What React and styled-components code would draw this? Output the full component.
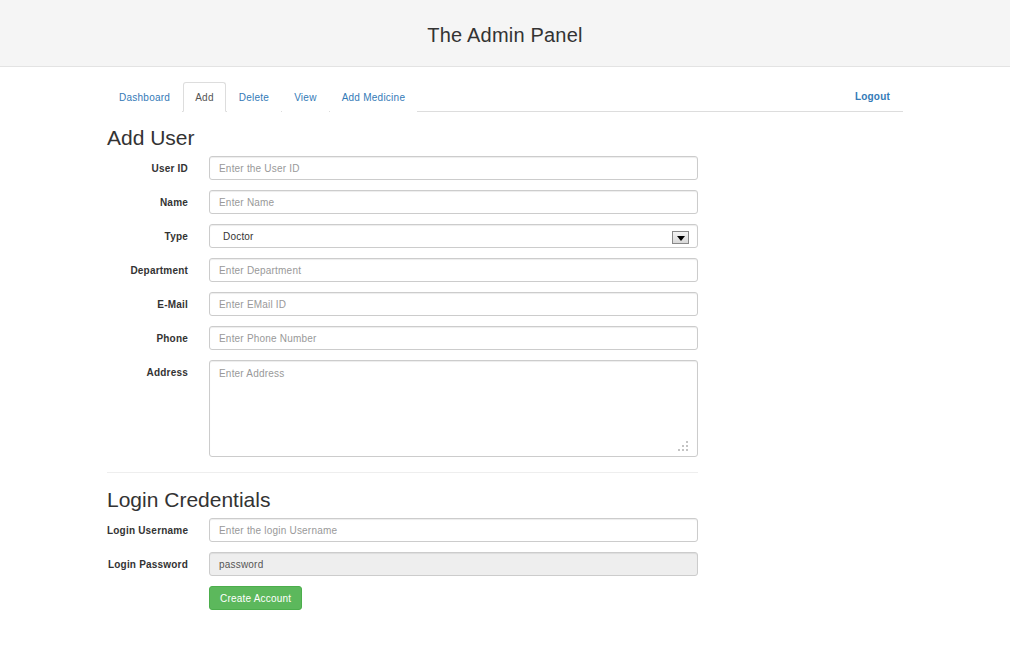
import React from "react"
import styled, { createGlobalStyle } from "styled-components"

const GlobalStyle = createGlobalStyle`
  html, body {
    margin: 0;
    padding: 0;
    background: #fff;
    font-family: "Liberation Sans", Arial, sans-serif;
    color: #333;
  }
  * {
    box-sizing: border-box;
  }
`

const tabs = ["Dashboard", "Add", "Delete", "View", "Add Medicine"]

const userFields = [
  { label: "User ID", placeholder: "Enter the User ID" },
  { label: "Name", placeholder: "Enter Name" },
  { label: "Type", select: "Doctor" },
  { label: "Department", placeholder: "Enter Department" },
  { label: "E-Mail", placeholder: "Enter EMail ID" },
  { label: "Phone", placeholder: "Enter Phone Number" },
  { label: "Address", placeholder: "Enter Address", multiline: true },
]

const SelectArrow = () => (
  <ArrowBox>
    <svg width="8" height="5" viewBox="0 0 8 5">
      <path d="M0 0 H8 L4 5 Z" fill="#000" />
    </svg>
  </ArrowBox>
)

const dotSpots = [
  [8, 0],
  [4, 4],
  [8, 4],
  [0, 8],
  [4, 8],
  [8, 8],
]

const ResizeDots = () => (
  <Dots width="10" height="10" viewBox="0 0 10 10">
    {dotSpots.map(([x, y]) => (
      <rect key={`${x}-${y}`} x={x} y={y} width="2" height="2" fill="#c4c4c4" />
    ))}
  </Dots>
)

const Field = ({ label, placeholder, select, multiline }) => {
  let control
  if (select) {
    control = (
      <FakeSelect>
        <span>{select}</span>
        <SelectArrow />
      </FakeSelect>
    )
  } else if (multiline) {
    control = (
      <AreaWrap>
        <TextArea placeholder={placeholder} />
        <ResizeDots />
      </AreaWrap>
    )
  } else {
    control = <Input placeholder={placeholder} />
  }
  return (
    <Row>
      <Label>{label}</Label>
      {control}
    </Row>
  )
}

const App = () => {
  return (
    <>
      <GlobalStyle />
      <Header>
        <Title>The Admin Panel</Title>
      </Header>
      <Container>
        <Tabs>
          {tabs.map((t) => (
            <Tab key={t} active={t === "Add"}>
              {t}
            </Tab>
          ))}
          <Logout>Logout</Logout>
        </Tabs>

        <Form>
          <Heading>Add User</Heading>
          <Fields>
            {userFields.map((f) => (
              <Field key={f.label} {...f} />
            ))}
          </Fields>

          <Divider />

          <Heading second>Login Credentials</Heading>
          <Fields>
            <Field label="Login Username" placeholder="Enter the login Username" />
            <Row>
              <Label>Login Password</Label>
              <Input disabled value="password" readOnly />
            </Row>
            <Row>
              <span />
              <div>
                <Button type="button">Create Account</Button>
              </div>
            </Row>
          </Fields>
        </Form>
      </Container>
    </>
  )
}

const Header = styled.header`
  height: 67px;
  background: #f5f5f5;
  border-bottom: 1px solid #e3e3e3;
  display: flex;
  align-items: center;
  justify-content: center;
`

const Title = styled.h1`
  margin: 0;
  padding-top: 4px;
  font-size: 20px;
  font-weight: normal;
  letter-spacing: 0.2px;
  color: #333;
`

const Container = styled.div`
  width: 796px;
  margin: 15px auto 0;
`

const Tabs = styled.nav`
  display: flex;
  align-items: flex-end;
  height: 30px;
  border-bottom: 1px solid #ddd;
`

const Tab = styled.a`
  height: 30px;
  margin-bottom: -1px;
  margin-right: 1px;
  padding: 0 11px;
  display: flex;
  align-items: center;
  font-size: 10px;
  letter-spacing: 0.25px;
  color: ${({ active }) => (active ? "#555" : "#337ab7")};
  background: #fff;
  border: 1px solid ${({ active }) => (active ? "#ddd" : "transparent")};
  border-bottom-color: ${({ active }) => (active ? "#fff" : "transparent")};
  border-radius: 3px 3px 0 0;
  cursor: pointer;
`

const Logout = styled.a`
  margin-left: auto;
  height: 30px;
  padding: 0 13px 0 12px;
  display: flex;
  align-items: center;
  font-size: 10px;
  font-weight: bold;
  letter-spacing: 0.2px;
  color: #337ab7;
  cursor: pointer;
`

const Form = styled.form`
  width: 591px;
`

const Heading = styled.h2`
  margin: ${({ second }) => (second ? "15px 0 7px" : "14px 0 7px")};
  font-size: 21px;
  font-weight: normal;
  line-height: 23px;
  color: #333;
`

const Fields = styled.div`
  display: flex;
  flex-direction: column;
  gap: 10px;
`

const Row = styled.div`
  display: grid;
  grid-template-columns: 81px 1fr;
  column-gap: 21px;
  align-items: start;
`

const Label = styled.label`
  margin-bottom: -1px;
  font-size: 10px;
  font-weight: bold;
  line-height: 25px;
  letter-spacing: 0.2px;
  text-align: right;
  color: #333;
  white-space: nowrap;
`

const controlBase = `
  width: 100%;
  height: 24px;
  border: 1px solid #ccc;
  border-radius: 3px;
  padding: 0 9px;
  font-family: "Liberation Sans", Arial, sans-serif;
  font-size: 10px;
  letter-spacing: 0.2px;
  color: #555;
  background: #fff;
  box-shadow: inset 0 1px 1px rgba(0, 0, 0, 0.075);
  outline: none;

  &::placeholder {
    color: #999;
  }
`

const Input = styled.input`
  ${controlBase}

  &:disabled {
    background: #eee;
    color: #555;
  }
`

const FakeSelect = styled.div`
  ${controlBase}
  display: flex;
  align-items: center;
  justify-content: space-between;
  padding: 0 8px 0 13px;
  color: #333;
`

const ArrowBox = styled.div`
  width: 17px;
  height: 13px;
  margin-top: 2px;
  border: 1px solid #888;
  background: linear-gradient(#f4f4f4, #d8d8d8);
  display: flex;
  align-items: flex-end;
  justify-content: center;
  padding-bottom: 2px;
`

const AreaWrap = styled.div`
  position: relative;
  height: 97px;
`

const TextArea = styled.textarea`
  ${controlBase}
  height: 97px;
  padding: 7px 9px;
  resize: none;
  display: block;
`

const Dots = styled.svg`
  position: absolute;
  right: 10px;
  bottom: 6px;
`

const Divider = styled.hr`
  margin: 15px 0 0;
  border: 0;
  border-top: 1px solid #eee;
`

const Button = styled.button`
  height: 24px;
  padding: 0 10px;
  font-family: "Liberation Sans", Arial, sans-serif;
  font-size: 10px;
  letter-spacing: 0.2px;
  color: #fff;
  background: #5cb85c;
  border: 1px solid #4cae4c;
  border-radius: 3px;
  cursor: pointer;
`

export default App
